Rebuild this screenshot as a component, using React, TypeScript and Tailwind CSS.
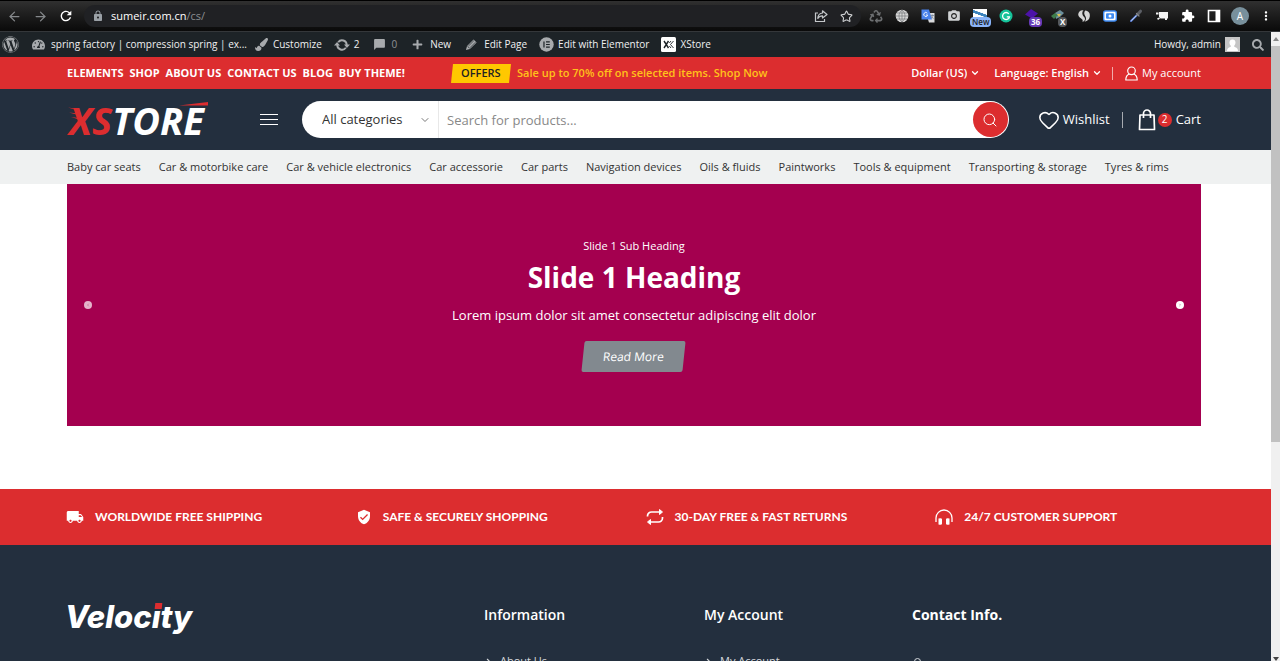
import React, { useState } from "react";
import clsx from "clsx";
import {
  ArrowLeft,
  ArrowRight,
  ChevronDown,
  ChevronRight,
  Heart,
  Search,
  Star,
} from "lucide-react";
import {
  FaWordpress,
  FaTachometerAlt,
  FaPaintBrush,
  FaPlus,
  FaRecycle,
  FaSearch,
} from "react-icons/fa";
import {
  MdCameraAlt,
  MdExtension,
  MdLocalShipping,
  MdLock,
  MdModeComment,
  MdMoreVert,
  MdRefresh,
  MdVerifiedUser,
} from "react-icons/md";

const mainLinks = ["ELEMENTS", "SHOP", "ABOUT US", "CONTACT US", "BLOG", "BUY THEME!"];

const categories = [
  "Baby car seats",
  "Car & motorbike care",
  "Car & vehicle electronics",
  "Car accessorie",
  "Car parts",
  "Navigation devices",
  "Oils & fluids",
  "Paintworks",
  "Tools & equipment",
  "Transporting & storage",
  "Tyres & rims",
];

const container = "pl-[67px] pr-[70px]";

const ShareIcon = () => (
  <svg viewBox="0 0 14 14" className="h-[14px] w-[14px]" fill="none" stroke="#c4c7ca" strokeWidth="1.2">
    <path d="M4 4H1.5v8.5h9V10" />
    <path d="M8.5 1.8 13 5.5 8.5 9V6.8C6.2 6.8 4.8 7.6 3.8 9.4 4 6.2 5.6 4.2 8.5 4z" strokeLinejoin="round" />
  </svg>
);

const GlobeIcon = () => (
  <svg viewBox="0 0 14 14" className="h-[14px] w-[14px]">
    <circle cx="7" cy="7" r="6.3" fill="#d6d6d6" />
    <path
      d="M7 1v12M1 7h12M2 4h10M2 10h10M7 1C3 4 3 10 7 13M7 1c4 3 4 9 0 12"
      fill="none"
      stroke="#77797b"
      strokeWidth=".7"
    />
  </svg>
);

const TranslateIcon = () => (
  <svg viewBox="0 0 14 14" className="h-[14px] w-[14px]">
    <path d="M5 4h8.5v9.5H8z" fill="#d9dadc" />
    <path d="M.5.5H8l3 10H.5z" fill="#4a82ec" />
    <path d="M6.3 4.2A2 2 0 1 0 6.7 6H5" fill="none" stroke="#fff" strokeWidth=".9" />
    <path d="M9.5 6.5h3.5M11.3 5.5v1c0 1.5-.6 2.5-1.3 3M10.5 7.5c.5 1 1.2 1.6 2 2" fill="none" stroke="#6c7a90" strokeWidth=".7" />
  </svg>
);

const GrammarIcon = () => (
  <svg viewBox="0 0 14 14" className="h-[14px] w-[14px]">
    <circle cx="7" cy="7" r="6.5" fill="#15c39a" />
    <path d="M9.8 4.8A3.5 3.5 0 1 0 10.5 7.8H7.8" fill="none" stroke="#fff" strokeWidth="1.3" />
  </svg>
);

const SpiralIcon = () => (
  <svg viewBox="0 0 14 14" className="h-[14px] w-[14px]" fill="#d5d5d5">
    <path d="M6.5 1.2C3.4.8 1.2 3 1.2 5.5S3.5 9 5 10.3c.9.8.8 1.7.4 2.4C8.5 12.3 8.6 9.5 7 7.8 5.3 6 4.5 3.5 6.5 1.2z" />
    <path d="M8.3 1.5c3.4.3 5 3 4.5 6-.4 2.8-2.3 4.8-5.3 5.2 2-2 1.8-4.2.7-5.8-1.2-1.7-1.4-3.700.1-5.4z" />
  </svg>
);

const CaptureIcon = () => (
  <svg viewBox="0 0 14 14" className="h-[14px] w-[14px]">
    <rect x=".7" y="2" width="12.6" height="10" rx="2" fill="#fff" stroke="#3f8cf4" strokeWidth="1.4" />
    <rect x="3" y="4.3" width="8" height="5.5" rx="1" fill="#3f8cf4" />
    <circle cx="7" cy="7" r="1.5" fill="#fff" />
  </svg>
);

const DropperIcon = () => (
  <svg viewBox="0 0 14 14" className="h-[14px] w-[14px]" strokeLinecap="round">
    <path d="M2 12 8 6" stroke="#5c80d8" strokeWidth="2" />
    <path d="m2.5 11.5 5-5" stroke="#dfe6f7" strokeWidth=".7" />
    <path d="m8.5 5.5 3-3.3" stroke="#5c5f66" strokeWidth="3" />
    <path d="m7.5 4.5 2.5 2.5" stroke="#82868c" strokeWidth="1.2" />
  </svg>
);

const CartoonIcon = () => (
  <svg viewBox="0 0 14 14" className="h-[14px] w-[14px]">
    <path d="M4 3h9v6.5H5.5L4 8z" fill="#f2f2f2" />
    <path d="M1 3.5h2.5v2H1zM2 9.5l2-1 1 1-2 1.5zM10 9h2v2h-2z" fill="#f2f2f2" />
  </svg>
);

const SidePanelIcon = () => (
  <svg viewBox="0 0 14 14" className="h-[14px] w-[14px]">
    <path d="M1.5 1.5h11v11h-11z" fill="none" stroke="#fff" strokeWidth="1.6" />
    <path d="M8.5 1.5h4v11h-4z" fill="#fff" />
  </svg>
);

const UpdatesIcon = () => (
  <svg viewBox="0 0 16 14" className="h-[14px] w-4">
    <path d="M4.2 4.2A4.7 4.7 0 0 1 12.7 7M11.8 9.8A4.7 4.7 0 0 1 3.3 7" fill="none" stroke="#a7aaad" strokeWidth="1.9" />
    <path d="M10 6.5h6L12.9 10zM0 7.5h6L3.1 4z" fill="#a7aaad" />
  </svg>
);

const CommentIcon = () => <MdModeComment className="h-[13px] w-[13px] -scale-x-100 text-[#a7aaad]" />;

const PencilIcon = () => (
  <svg viewBox="0 0 14 14" className="h-[13px] w-[13px]">
    <path d="m1 13 1.2-4.3 7-7.2 3.3 3.3-7.2 7z" fill="#a7aaad" />
    <path d="m3.6 8.8 6-6M5.3 10.5l6-6M2.7 9l2.3 2.3" stroke="#1d2327" strokeWidth=".7" />
  </svg>
);

const ElementorIcon = () => (
  <svg viewBox="0 0 16 16" className="h-[15px] w-[15px]">
    <circle cx="8" cy="8" r="7.7" fill="#a7aaad" />
    <path d="M5.3 4.7v6.6M7.5 5.3h4M7.5 8h4M7.5 10.7h4" stroke="#1d2327" strokeWidth="1.3" />
  </svg>
);

const XStoreIcon = () => (
  <svg viewBox="0 0 15 15" className="h-[15px] w-[15px]">
    <rect width="15" height="15" rx="1.5" fill="#fff" />
    <path d="m3 4 4.5 7M7.5 4 3 11" stroke="#1d2327" strokeWidth="1.4" />
    <path d="M12.5 4 9.5 7.5l3 3.5M10 4 8.3 6M8.3 9l1.7 2" fill="none" stroke="#1d2327" strokeWidth=".9" />
  </svg>
);

const UserIcon = () => (
  <svg viewBox="0 0 13 15" className="h-[15px] w-[13px]" fill="none" stroke="#fff" strokeWidth="1.2" strokeLinejoin="round">
    <circle cx="6.5" cy="4.8" r="3.8" />
    <path d="M4.3 8C2 8.8.8 10.8.8 14h11.4c0-3.2-1.2-5.2-3.5-6" />
  </svg>
);

const BagIcon = () => (
  <svg viewBox="0 0 18 22" className="h-[22px] w-[18px]" fill="none" stroke="#fff" strokeWidth="1.7" strokeLinejoin="round">
    <path d="M2 6h14l.5 14.5h-15z" />
    <path d="M5.5 9V4.5a3.5 3.5 0 0 1 7 0V9" />
  </svg>
);

const RepeatIcon = () => (
  <svg viewBox="0 0 18 18" className="h-[18px] w-[18px]" fill="none" stroke="#fff" strokeWidth="1.7" strokeLinejoin="round">
    <path d="M1.5 8.5V8a4 4 0 0 1 4-4H15M16.5 9v1a4 4 0 0 1-4 4H3" />
    <path d="M13.5 1.5 16.5 4l-3 2.5zM4.5 11.5l-3 2.5 3 2.5z" fill="#fff" strokeWidth="1" />
  </svg>
);

const HeadphonesIcon = () => (
  <svg viewBox="0 0 18 18" className="h-[18px] w-[18px]">
    <path d="M1 14V10a8 8 0 0 1 16 0v4" fill="none" stroke="#fff" strokeWidth="1.3" />
    <path d="M3.5 10.5q3.5-.8 3.5.8v4.4q0 1.6-3.5.8zM14.5 10.5q-3.5-.8-3.5.8v4.4q0 1.6 3.5.8z" fill="#fff" />
  </svg>
);

const BrowserBar: React.FC = () => (
  <div className="flex h-8 shrink-0 items-center border-t border-b border-t-black border-b-[#34373a] bg-gradient-to-b from-[#303030] to-[#0a0a0a] text-[#d0d2d4]">
    <button aria-label="Back" className="ml-[7px] text-[#85888b]">
      <ArrowLeft className="h-[15px] w-[15px]" strokeWidth={2} />
    </button>
    <button aria-label="Forward" className="ml-[11px] text-[#85888b]">
      <ArrowRight className="h-[15px] w-[15px]" strokeWidth={2} />
    </button>
    <button aria-label="Reload" className="ml-[10px] text-white">
      <MdRefresh className="h-4 w-4" />
    </button>
    <div className="ml-[10px] flex h-[22px] flex-1 items-center rounded-full bg-[#202124] pr-2 pl-2">
      <MdLock className="h-3 w-3 text-[#9aa0a6]" />
      <span className="ml-[7px] flex-1 text-[11px] text-white">
        sumeir.com.cn<span className="text-[#8b8e91]">/cs/</span>
      </span>
      <div className="flex items-center gap-3">
        <ShareIcon />
        <Star className="h-[13px] w-[13px]" />
      </div>
    </div>
    <div className="mr-[7px] ml-2 flex items-center gap-3">
      <FaRecycle className="h-[13px] w-[14px] text-[#6d6f71]" />
      <GlobeIcon />
      <TranslateIcon />
      <MdCameraAlt className="h-[14px] w-[14px]" />
      <span className="relative h-[14px] w-[14px] bg-[linear-gradient(200deg,#fff_30%,#3b83bd_32%,#3b83bd_45%,#fff_47%)]">
        <span className="absolute top-[8px] -left-[3px] rounded-sm bg-[#8ab4f8] px-[2px] text-[8px] leading-[10px] font-semibold text-[#202124]">
          New
        </span>
      </span>
      <GrammarIcon />
      <span className="relative h-[14px] w-[14px]">
        <svg viewBox="0 0 14 14" className="h-[14px] w-[14px]">
          <path d="m6 0 7 4.5-6 5L0 5.5z" fill="#4c12a8" />
        </svg>
        <span className="absolute top-[8px] left-[4px] rounded-sm bg-[#673ab7] px-[2px] text-[8px] leading-[10px] font-bold text-white">36</span>
      </span>
      <span className="relative h-[14px] w-[14px]">
        <svg viewBox="0 0 14 14" className="h-[14px] w-[14px]">
          <path d="m4 4 5-3 4 3-4 4-4 2z" fill="#6b8f9c" />
          <path d="M0 7l4-3 3 2-4 4z" fill="#3e7d4c" />
          <path d="M6 5h4l-2 3z" fill="#e2c253" />
        </svg>
        <span className="absolute top-[8px] left-[7px] rounded-sm bg-[#56595c] px-[2px] text-[8px] leading-[10px] font-bold text-white">X</span>
      </span>
      <SpiralIcon />
      <CaptureIcon />
      <DropperIcon />
      <CartoonIcon />
      <MdExtension className="h-[14px] w-[14px] text-white" />
      <SidePanelIcon />
      <span className="-mx-[2px] flex h-[18px] w-[18px] items-center justify-center rounded-full bg-[#78909c] text-[10px] text-white">
        A
      </span>
      <button aria-label="Menu">
        <MdMoreVert className="h-4 w-[14px] text-white" />
      </button>
    </div>
  </div>
);

const AdminBar: React.FC = () => (
  <div className="flex h-[25px] shrink-0 items-center bg-[#1d2327] text-[10px] text-[#f0f0f1]">
    <a href="#" aria-label="WordPress" className="ml-[2px]">
      <FaWordpress className="h-[17px] w-[17px] text-[#a7aaad]" />
    </a>
    <a href="#" className="ml-[13px] flex items-center gap-[6px]">
      <FaTachometerAlt className="h-[13px] w-[13px] text-[#a7aaad]" />
      spring factory | compression spring | ex...
    </a>
    <a href="#" className="ml-2 flex items-center gap-[5px]">
      <FaPaintBrush className="h-[13px] w-[13px] text-[#a7aaad]" />
      Customize
    </a>
    <a href="#" className="ml-3 flex items-center gap-1">
      <UpdatesIcon />2
    </a>
    <a href="#" className="ml-[13px] flex items-center gap-[6px] text-[#8f9296]">
      <CommentIcon />0
    </a>
    <a href="#" className="ml-[15px] flex items-center gap-[7px]">
      <FaPlus className="h-[11px] w-[11px] text-[#a7aaad]" />
      New
    </a>
    <a href="#" className="ml-[14px] flex items-center gap-[6px]">
      <PencilIcon />
      Edit Page
    </a>
    <a href="#" className="ml-3 flex items-center gap-1">
      <ElementorIcon />
      Edit with Elementor
    </a>
    <a href="#" className="ml-3 flex items-center gap-1">
      <XStoreIcon />
      XStore
    </a>
    <a href="#" className="ml-auto flex items-center gap-1">
      Howdy, admin
      <svg viewBox="0 0 15 15" className="h-[15px] w-[15px]">
        <path d="M0 0h15v15H0z" fill="#c5c5c5" />
        <path d="M7.5 2.5c4 0 3.5 5 1.5 6.5 0 1.5 4 1 4 5H2c0-4 4-3.5 4-5C4 7.5 3.5 2.5 7.5 2.5z" fill="#fff" />
      </svg>
    </a>
    <button aria-label="Search site" className="mr-[7px] ml-3">
      <FaSearch className="h-3 w-3 text-[#a7aaad]" />
    </button>
  </div>
);

const TopBar: React.FC = () => (
  <div className={clsx(container, "flex h-8 shrink-0 items-center bg-[#dc2d2f] text-[11px] text-white")}>
    <nav className="flex w-[385px] gap-[6px] font-bold">
      {mainLinks.map((link) => (
        <a key={link} href="#" className="whitespace-nowrap">
          {link}
        </a>
      ))}
    </nav>
    <span className="flex h-[19px] w-[58px] -skew-x-6 items-center justify-center bg-[#ffc800]">
      <span className="skew-x-6 font-semibold text-[#222]">OFFERS</span>
    </span>
    <a href="#" className="ml-[7px] font-semibold text-[#ffc21a]">
      Sale up to 70% off on selected items. Shop Now
    </a>
    <div className="ml-auto flex items-center font-semibold">
      <label className="flex items-center gap-[3px]">
        <select aria-label="Currency" className="appearance-none field-sizing-content">
          <option>Dollar (US)</option>
        </select>
        <ChevronDown className="h-[10px] w-[10px]" strokeWidth={3} />
      </label>
      <label className="ml-[14px] flex items-center gap-[3px]">
        <select aria-label="Language" className="appearance-none field-sizing-content">
          <option>Language: English</option>
        </select>
        <ChevronDown className="h-[10px] w-[10px]" strokeWidth={3} />
      </label>
      <span className="mr-3 ml-[10px] h-[13px] w-px bg-white/60" />
      <a href="#" className="flex items-center gap-1 font-medium">
        <UserIcon />
        My account
      </a>
    </div>
  </div>
);

const Logo: React.FC = () => (
  <a href="#" className="relative w-[141px] pl-[2px] text-[38px] leading-[36px] font-bold whitespace-nowrap text-white italic">
    <span className="text-[#dc2d2f]">XS</span>TORE
    <svg viewBox="0 0 141 36" className="absolute top-0 left-0 h-9 w-[141px]">
      <path d="M112 3.5 141 0v3.5z" fill="#dc2d2f" />
      <path d="m1 5.500 10 1.500v1.500zM2 10.500l9 1v1.500zM4 15l8 1v1.500z" fill="#dc2d2f" />
    </svg>
  </a>
);

const Header: React.FC = () => {
  const [query, setQuery] = useState("");

  return (
    <header className={clsx(container, "flex h-[61px] shrink-0 items-center bg-[#232f3e] text-[13px] font-medium text-white")}>
      <Logo />
      <button aria-label="Open menu" className="ml-[52px] flex w-[18px] flex-col gap-1">
        <span className="h-px bg-white" />
        <span className="h-px bg-white" />
        <span className="h-px bg-white" />
      </button>
      <form
        onSubmit={(e) => e.preventDefault()}
        className="ml-6 flex h-[37px] min-w-0 flex-1 items-center rounded-full bg-white pl-5 text-[13px] font-normal"
      >
        <select aria-label="Category" className="w-[97px] appearance-none text-[#333]">
          <option>All categories</option>
        </select>
        <ChevronDown className="pointer-events-none h-3 w-3 text-[#777]" />
        <span className="ml-[7px] h-full w-px bg-[#e8e8e8]" />
        <input
          type="text"
          aria-label="Search for products"
          placeholder="Search for products..."
          value={query}
          onChange={(e) => setQuery(e.target.value)}
          className="h-full min-w-0 flex-1 pl-2 text-[#333] outline-none placeholder:text-[#888]"
        />
        <button
          type="submit"
          aria-label="Search"
          className="mr-px flex h-[35px] w-[35px] items-center justify-center rounded-full bg-[#dc2d2f] text-white"
        >
          <Search className="h-4 w-4" strokeWidth={1.5} />
        </button>
      </form>
      <a href="#" className="ml-[29px] flex items-center gap-[3px]">
        <Heart className="h-[22px] w-[22px]" strokeWidth={1.7} />
        Wishlist
      </a>
      <span className="mx-3 h-4 w-px bg-white/60" />
      <a href="#" className="ml-[3px] flex items-center">
        <BagIcon />
        <span className="mr-1 ml-[2px] flex h-[14px] w-[14px] items-center justify-center rounded-full bg-[#dc2d2f] text-[10px] font-normal">
          2
        </span>
        Cart
      </a>
    </header>
  );
};

const CategoryNav: React.FC = () => (
  <nav className={clsx(container, "flex h-[34px] shrink-0 items-center gap-[18px] bg-[#eff1f1] text-[11px] text-[#333]")}>
    {categories.map((category) => (
      <a key={category} href="#" className="whitespace-nowrap">
        {category}
      </a>
    ))}
  </nav>
);

const Slider: React.FC = () => (
  <section className={clsx(container, "shrink-0 bg-white pb-[63px]")}>
    <div className="flex h-[242px] items-center justify-between bg-[#a4004f] px-[17px] text-white">
      <button aria-label="Previous slide" className="flex h-2 w-2 items-center justify-center rounded-full bg-white/70 text-[#a4004f]">
        <ChevronRight className="h-1 w-1 rotate-180" />
      </button>
      <div className="flex flex-col items-center">
        <p className="text-[11px] leading-4">Slide 1 Sub Heading</p>
        <h2 className="mt-[3px] text-[28px] leading-10 font-bold">Slide 1 Heading</h2>
        <p className="mt-2 text-[13px] leading-5">Lorem ipsum dolor sit amet consectetur adipiscing elit dolor</p>
        <a
          href="#"
          className="mt-4 flex h-[31px] w-[101px] -skew-x-6 items-center justify-center rounded-xs bg-[#82898f] text-xs font-medium"
        >
          Read More
        </a>
      </div>
      <button aria-label="Next slide" className="flex h-2 w-2 items-center justify-center rounded-full bg-white text-[#a4004f]">
        <ChevronRight className="h-1 w-1" />
      </button>
    </div>
  </section>
);

const features = [
  { icon: <MdLocalShipping className="h-[18px] w-[18px]" />, label: "WORLDWIDE FREE SHIPPING" },
  { icon: <MdVerifiedUser className="h-4 w-4" />, label: "SAFE & SECURELY SHOPPING" },
  { icon: <RepeatIcon />, label: "30-DAY FREE & FAST RETURNS" },
  { icon: <HeadphonesIcon />, label: "24/7 CUSTOMER SUPPORT" },
];

const Features: React.FC = () => (
  <section className="shrink-0 bg-[#dc2d2f] pl-[66px] pr-[46px] text-white">
    <ul className="grid h-14 grid-cols-4 items-center font-['Lato',sans-serif] text-xs font-bold">
      {features.map(({ icon, label }) => (
        <li key={label} className="flex items-center gap-[11px] whitespace-nowrap">
          {icon}
          {label}
        </li>
      ))}
    </ul>
  </section>
);

const Footer: React.FC = () => (
  <footer className={clsx(container, "shrink-0 bg-[#232f3e] pt-[58px] pb-10 text-[11px] text-[#d5d8dc]")}>
    <div className="grid grid-cols-[417px_220px_208px_1fr] items-start">
      <a href="#" className="-ml-[2px] font-['Inter',sans-serif] text-[31px] leading-7 font-extrabold text-white italic">
        Veloc
        <span className="relative">
          i<span className="absolute top-[5px] left-[3px] h-[6px] w-[7px] -skew-x-6 bg-[#dc2d2f]" />
        </span>
        ty
      </a>
      <div>
        <h3 className="text-sm leading-6 font-semibold text-white">Information</h3>
        <a href="#" className="mt-[26px] flex items-center gap-[7px]">
          <ChevronRight className="h-[9px] w-[9px]" strokeWidth={3} />
          About Us
        </a>
      </div>
      <div>
        <h3 className="text-sm leading-6 font-semibold text-white">My Account</h3>
        <a href="#" className="mt-[26px] flex items-center gap-[7px]">
          <ChevronRight className="h-[9px] w-[9px]" strokeWidth={3} />
          My Account
        </a>
      </div>
      <div>
        <h3 className="text-sm leading-6 font-bold text-white">Contact Info.</h3>
        <span className="mt-[31px] ml-[2px] block h-2 w-[7px] rounded-full border border-[#d5d8dc]" />
      </div>
    </div>
  </footer>
);

const Scrollbar = () => (
  <div aria-hidden="true" className="flex w-[9px] shrink-0 flex-col items-center bg-[#f0f0f0]">
    <span className="mt-[5px] border-x-3 border-b-4 border-x-transparent border-b-[#888]" />
    <span className="mt-[5px] h-[63%] w-full bg-[#c1c1c1]" />
    <span className="mt-auto border-x-3 border-t-4 border-x-transparent border-t-[#444]" />
  </div>
);

const App: React.FC = () => {
  return (
    <div className="flex h-screen flex-col overflow-hidden bg-white font-['Open_Sans',sans-serif]">
      <BrowserBar />
      <div className="flex min-h-0 flex-1">
        <div className="flex min-w-0 flex-1 flex-col overflow-hidden">
          <AdminBar />
          <TopBar />
          <Header />
          <CategoryNav />
          <Slider />
          <Features />
          <Footer />
        </div>
        <Scrollbar />
      </div>
    </div>
  );
};

export default App;
